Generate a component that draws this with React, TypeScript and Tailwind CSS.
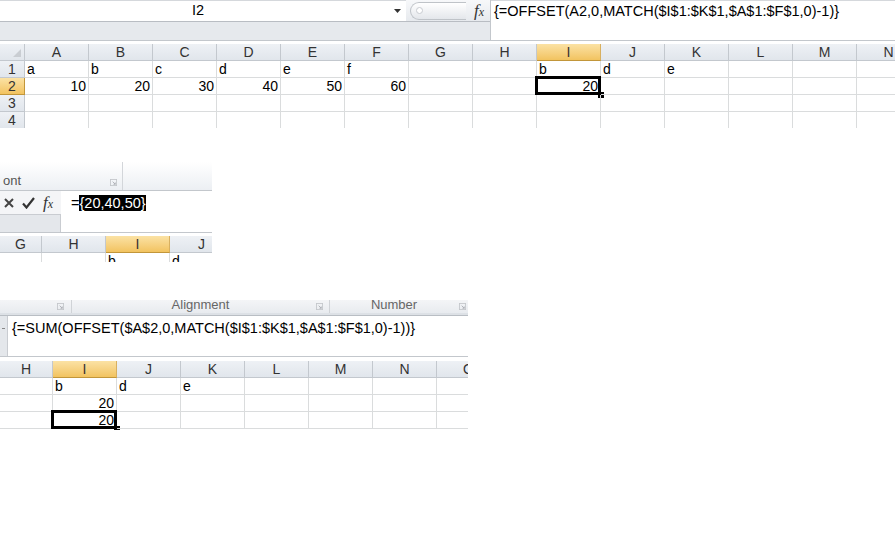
import React from "react";

type Col = { k: string; w: string; hl?: boolean };
type Cell = { t: string; right?: boolean; sel?: boolean };

const FONT = "font-['Liberation_Sans',Arial,sans-serif]";

const topCols: Col[] = [
  { k: "A", w: "w-[64px]" },
  { k: "B", w: "w-[64px]" },
  { k: "C", w: "w-[64px]" },
  { k: "D", w: "w-[64px]" },
  { k: "E", w: "w-[64px]" },
  { k: "F", w: "w-[64px]" },
  { k: "G", w: "w-[64px]" },
  { k: "H", w: "w-[64px]" },
  { k: "I", w: "w-[64px]", hl: true },
  { k: "J", w: "w-[64px]" },
  { k: "K", w: "w-[64px]" },
  { k: "L", w: "w-[64px]" },
  { k: "M", w: "w-[64px]" },
  { k: "N", w: "w-[64px]" },
];

const midCols: Col[] = [
  { k: "G", w: "w-[42px]" },
  { k: "H", w: "w-[64px]" },
  { k: "I", w: "w-[64px]", hl: true },
  { k: "J", w: "w-[64px]" },
];

const lowCols: Col[] = [
  { k: "H", w: "w-[53px]" },
  { k: "I", w: "w-[64px]", hl: true },
  { k: "J", w: "w-[64px]" },
  { k: "K", w: "w-[64px]" },
  { k: "L", w: "w-[64px]" },
  { k: "M", w: "w-[64px]" },
  { k: "N", w: "w-[64px]" },
  { k: "O", w: "w-[64px]" },
];

const topRows: { n: string; hl?: boolean; cells: Record<string, Cell> }[] = [
  {
    n: "1",
    cells: {
      A: { t: "a" }, B: { t: "b" }, C: { t: "c" }, D: { t: "d" }, E: { t: "e" }, F: { t: "f" },
      I: { t: "b" }, J: { t: "d" }, K: { t: "e" },
    },
  },
  {
    n: "2",
    hl: true,
    cells: {
      A: { t: "10", right: true }, B: { t: "20", right: true }, C: { t: "30", right: true },
      D: { t: "40", right: true }, E: { t: "50", right: true }, F: { t: "60", right: true },
      I: { t: "20", right: true, sel: true },
    },
  },
  { n: "3", cells: {} },
  { n: "4", cells: {} },
];

const lowRows: Record<string, Cell>[] = [
  { I: { t: "b" }, J: { t: "d" }, K: { t: "e" } },
  { I: { t: "20", right: true } },
  { I: { t: "20", right: true, sel: true } },
];

function HeadCell({ c }: { c: Col }) {
  return (
    <div
      className={`${c.w} shrink-0 h-[17px] box-border border-r border-b text-center text-[14px] leading-[16px] text-[#333] ${
        c.hl
          ? "bg-linear-to-b from-[#fbe2a4] to-[#f2c35f] border-r-[#d8b060] border-b-[#c2963a]"
          : "bg-linear-to-b from-[#eef1f5] to-[#e1e6ec] border-[#c3c8ce]"
      }`}
    >
      {c.k}
    </div>
  );
}

function GridCell({ w, cell }: { w: string; cell?: Cell }) {
  return (
    <div
      className={`${w} shrink-0 h-[17px] box-border border-r border-b border-[#dadcdd] relative px-[2px] text-[14px] leading-[16px] text-black whitespace-nowrap ${
        cell?.right ? "text-right" : "text-left"
      }`}
    >
      {cell?.t}
      {cell?.sel && (
        <>
          <div className="absolute -left-[2px] -top-[2px] -right-px -bottom-px border-[3px] border-black" />
          <div className="absolute -right-[4px] -bottom-[4px] w-[6px] h-[6px] bg-black" />
        </>
      )}
    </div>
  );
}

function Fx() {
  return (
    <span className="font-['Liberation_Serif',serif] italic text-[17px] leading-none text-[#333]">
      f<span className="text-[12px]">x</span>
    </span>
  );
}

function Launcher({ cls }: { cls: string }) {
  return (
    <svg width="7" height="7" viewBox="0 0 8 8" className={cls}>
      <rect x="0.5" y="0.5" width="7" height="7" fill="none" stroke="#c4c7cb" />
      <path d="M3 3l3 3M6 4v2H4" stroke="#a9adb2" fill="none" />
    </svg>
  );
}

function TopShot() {
  return (
    <div className="h-[128px] overflow-hidden">
      <div className="flex h-[41px] border-b border-[#c3c7cc]">
        <div className="w-[491px] shrink-0 flex flex-col bg-[#e6e9ed] border-r border-[#c3c7cc]">
          <div className="h-[22px] flex border-b border-[#b9bdc3]">
            <div className="w-[406px] bg-white flex items-center border-t border-[#d5d8dc]">
              <span className="flex-1 text-center text-[14.5px] pl-[2px] text-black">I2</span>
              <svg width="8" height="5" viewBox="0 0 8 5" className="mr-[4px]">
                <path d="M0 0h7L3.5 4z" fill="#333" />
              </svg>
            </div>
            <div className="flex-1 flex items-center bg-linear-to-b from-[#f7f8fa] to-[#e7eaee]">
              <div className="ml-[4px] w-[56px] h-[18px] rounded-l-full border border-r-0 border-[#bfc3c8] bg-linear-to-b from-white to-[#e4e7eb] flex items-center">
                <div className="ml-[5px] w-[7px] h-[7px] rounded-full border border-[#c8cbd0] bg-white" />
              </div>
              <div className="ml-[8px]">
                <Fx />
              </div>
            </div>
          </div>
        </div>
        <div className="flex-1 bg-white border-t border-[#d5d8dc] pl-[3px] pt-[2px] text-[14.5px] leading-[17px] text-black whitespace-nowrap">
          {"{=OFFSET(A2,0,MATCH($I$1:$K$1,$A$1:$F$1,0)-1)}"}
        </div>
      </div>
      <div className="h-[3px] bg-white" />
      <div className="flex">
        <div className="w-[25px] shrink-0 h-[17px] box-border border-r border-b border-[#c3c8ce] bg-linear-to-b from-[#eef1f5] to-[#e1e6ec] relative">
          <svg width="8" height="8" viewBox="0 0 8 8" className="absolute right-[3px] bottom-[3px]">
            <path d="M8 0v8H0z" fill="#c9cdd2" />
          </svg>
        </div>
        {topCols.map((c) => (
          <HeadCell key={c.k} c={c} />
        ))}
      </div>
      {topRows.map((r) => (
        <div key={r.n} className="flex">
          <div
            className={`w-[25px] shrink-0 h-[17px] box-border border-r border-b text-center text-[14px] leading-[16px] text-[#333] ${
              r.hl
                ? "bg-linear-to-b from-[#fbe2a4] to-[#f2c35f] border-[#c2963a]"
                : "bg-linear-to-b from-[#eef1f5] to-[#e1e6ec] border-[#c3c8ce]"
            }`}
          >
            {r.n}
          </div>
          {topCols.map((c) => (
            <GridCell key={c.k} w={c.w} cell={r.cells[c.k]} />
          ))}
        </div>
      ))}
    </div>
  );
}

function MidShot() {
  return (
    <div className="mt-[34px] w-[212px] h-[120px] overflow-hidden">
      <div className="h-[29px] flex border-b border-[#c3c7cc] bg-linear-to-b from-white to-[#eceff3]">
        <div className="w-[123px] border-r border-[#d3d6da] relative">
          <span className="absolute left-[3px] bottom-[2px] text-[13px] leading-[14px] text-[#555]">ont</span>
          <Launcher cls="absolute right-[5px] bottom-[4px]" />
        </div>
        <div className="flex-1" />
      </div>
      <div className="h-[42px] flex border-b border-[#c3c7cc]">
        <div className="w-[61px] shrink-0 flex flex-col">
          <div className="h-[23px] flex items-center bg-[#f4f5f7] gap-[8px] pl-[4px]">
            <svg width="10" height="10" viewBox="0 0 10 10">
              <path d="M1 1l8 8M9 1l-8 8" stroke="#444" strokeWidth="2" />
            </svg>
            <svg width="13" height="12" viewBox="0 0 13 12">
              <path d="M1 6.5l3.5 4L12 1" stroke="#333" strokeWidth="2.2" fill="none" />
            </svg>
            <Fx />
          </div>
          <div className="flex-1 bg-[#e4e7eb] border-t border-r border-[#c9ccd1]" />
        </div>
        <div className="flex-1 bg-white pl-[10px] pt-[4px] text-[14.5px] leading-[17px] whitespace-nowrap">
          <span className="text-black">=</span>
          <span className="bg-black text-white">{"{20,40,50}"}</span>
        </div>
      </div>
      <div className="h-[3px] bg-white" />
      <div className="flex">
        {midCols.map((c) => (
          <HeadCell key={c.k} c={c} />
        ))}
      </div>
      <div className="flex h-[9px] overflow-hidden">
        {midCols.map((c) => (
          <GridCell key={c.k} w={c.w} cell={c.k === "I" ? { t: "b" } : c.k === "J" ? { t: "d" } : undefined} />
        ))}
      </div>
    </div>
  );
}

function LowShot() {
  return (
    <div className="mt-[18px] w-[468px] h-[130px] overflow-hidden">
      <div className="h-[13px] flex bg-linear-to-b from-[#f4f5f7] to-[#e8ebef] overflow-hidden relative">
        <div className="w-[72px] border-r border-[#d0d3d7] relative">
          <Launcher cls="absolute right-[7px] top-[3px]" />
        </div>
        <div className="w-[258px] border-r border-[#d0d3d7] relative">
          <span className="absolute left-0 right-0 -top-[3px] text-center text-[13px] leading-[15px] text-[#666]">
            Alignment
          </span>
          <Launcher cls="absolute right-[6px] top-[3px]" />
        </div>
        <div className="flex-1 relative">
          <span className="absolute left-0 right-[10px] -top-[3px] text-center text-[13px] leading-[15px] text-[#666]">
            Number
          </span>
          <Launcher cls="absolute right-[2px] top-[3px]" />
        </div>
      </div>
      <div className="h-[3px] bg-[#dde1e6] border-b border-[#b9bec4]" />
      <div className="h-[41px] flex border-b border-[#c3c7cc]">
        <div className="w-[8px] shrink-0 bg-[#e4e7eb] border-r border-[#c9ccd1] relative">
          <div className="absolute left-[2px] top-[12px] w-[3px] h-px bg-[#888]" />
        </div>
        <div className="flex-1 bg-white pl-[4px] pt-[4px] text-[14.5px] leading-[17px] text-black whitespace-nowrap">
          {"{=SUM(OFFSET($A$2,0,MATCH($I$1:$K$1,$A$1:$F$1,0)-1))}"}
        </div>
      </div>
      <div className="h-[4px] bg-white" />
      <div className="flex">
        {lowCols.map((c) => (
          <HeadCell key={c.k} c={c} />
        ))}
      </div>
      {lowRows.map((r, i) => (
        <div key={i} className="flex">
          {lowCols.map((c) => (
            <GridCell key={c.k} w={c.w} cell={r[c.k]} />
          ))}
        </div>
      ))}
    </div>
  );
}

export default function App() {
  return (
    <div className={`${FONT} w-[895px] h-[543px] bg-white overflow-hidden`}>
      <TopShot />
      <MidShot />
      <LowShot />
    </div>
  );
}
